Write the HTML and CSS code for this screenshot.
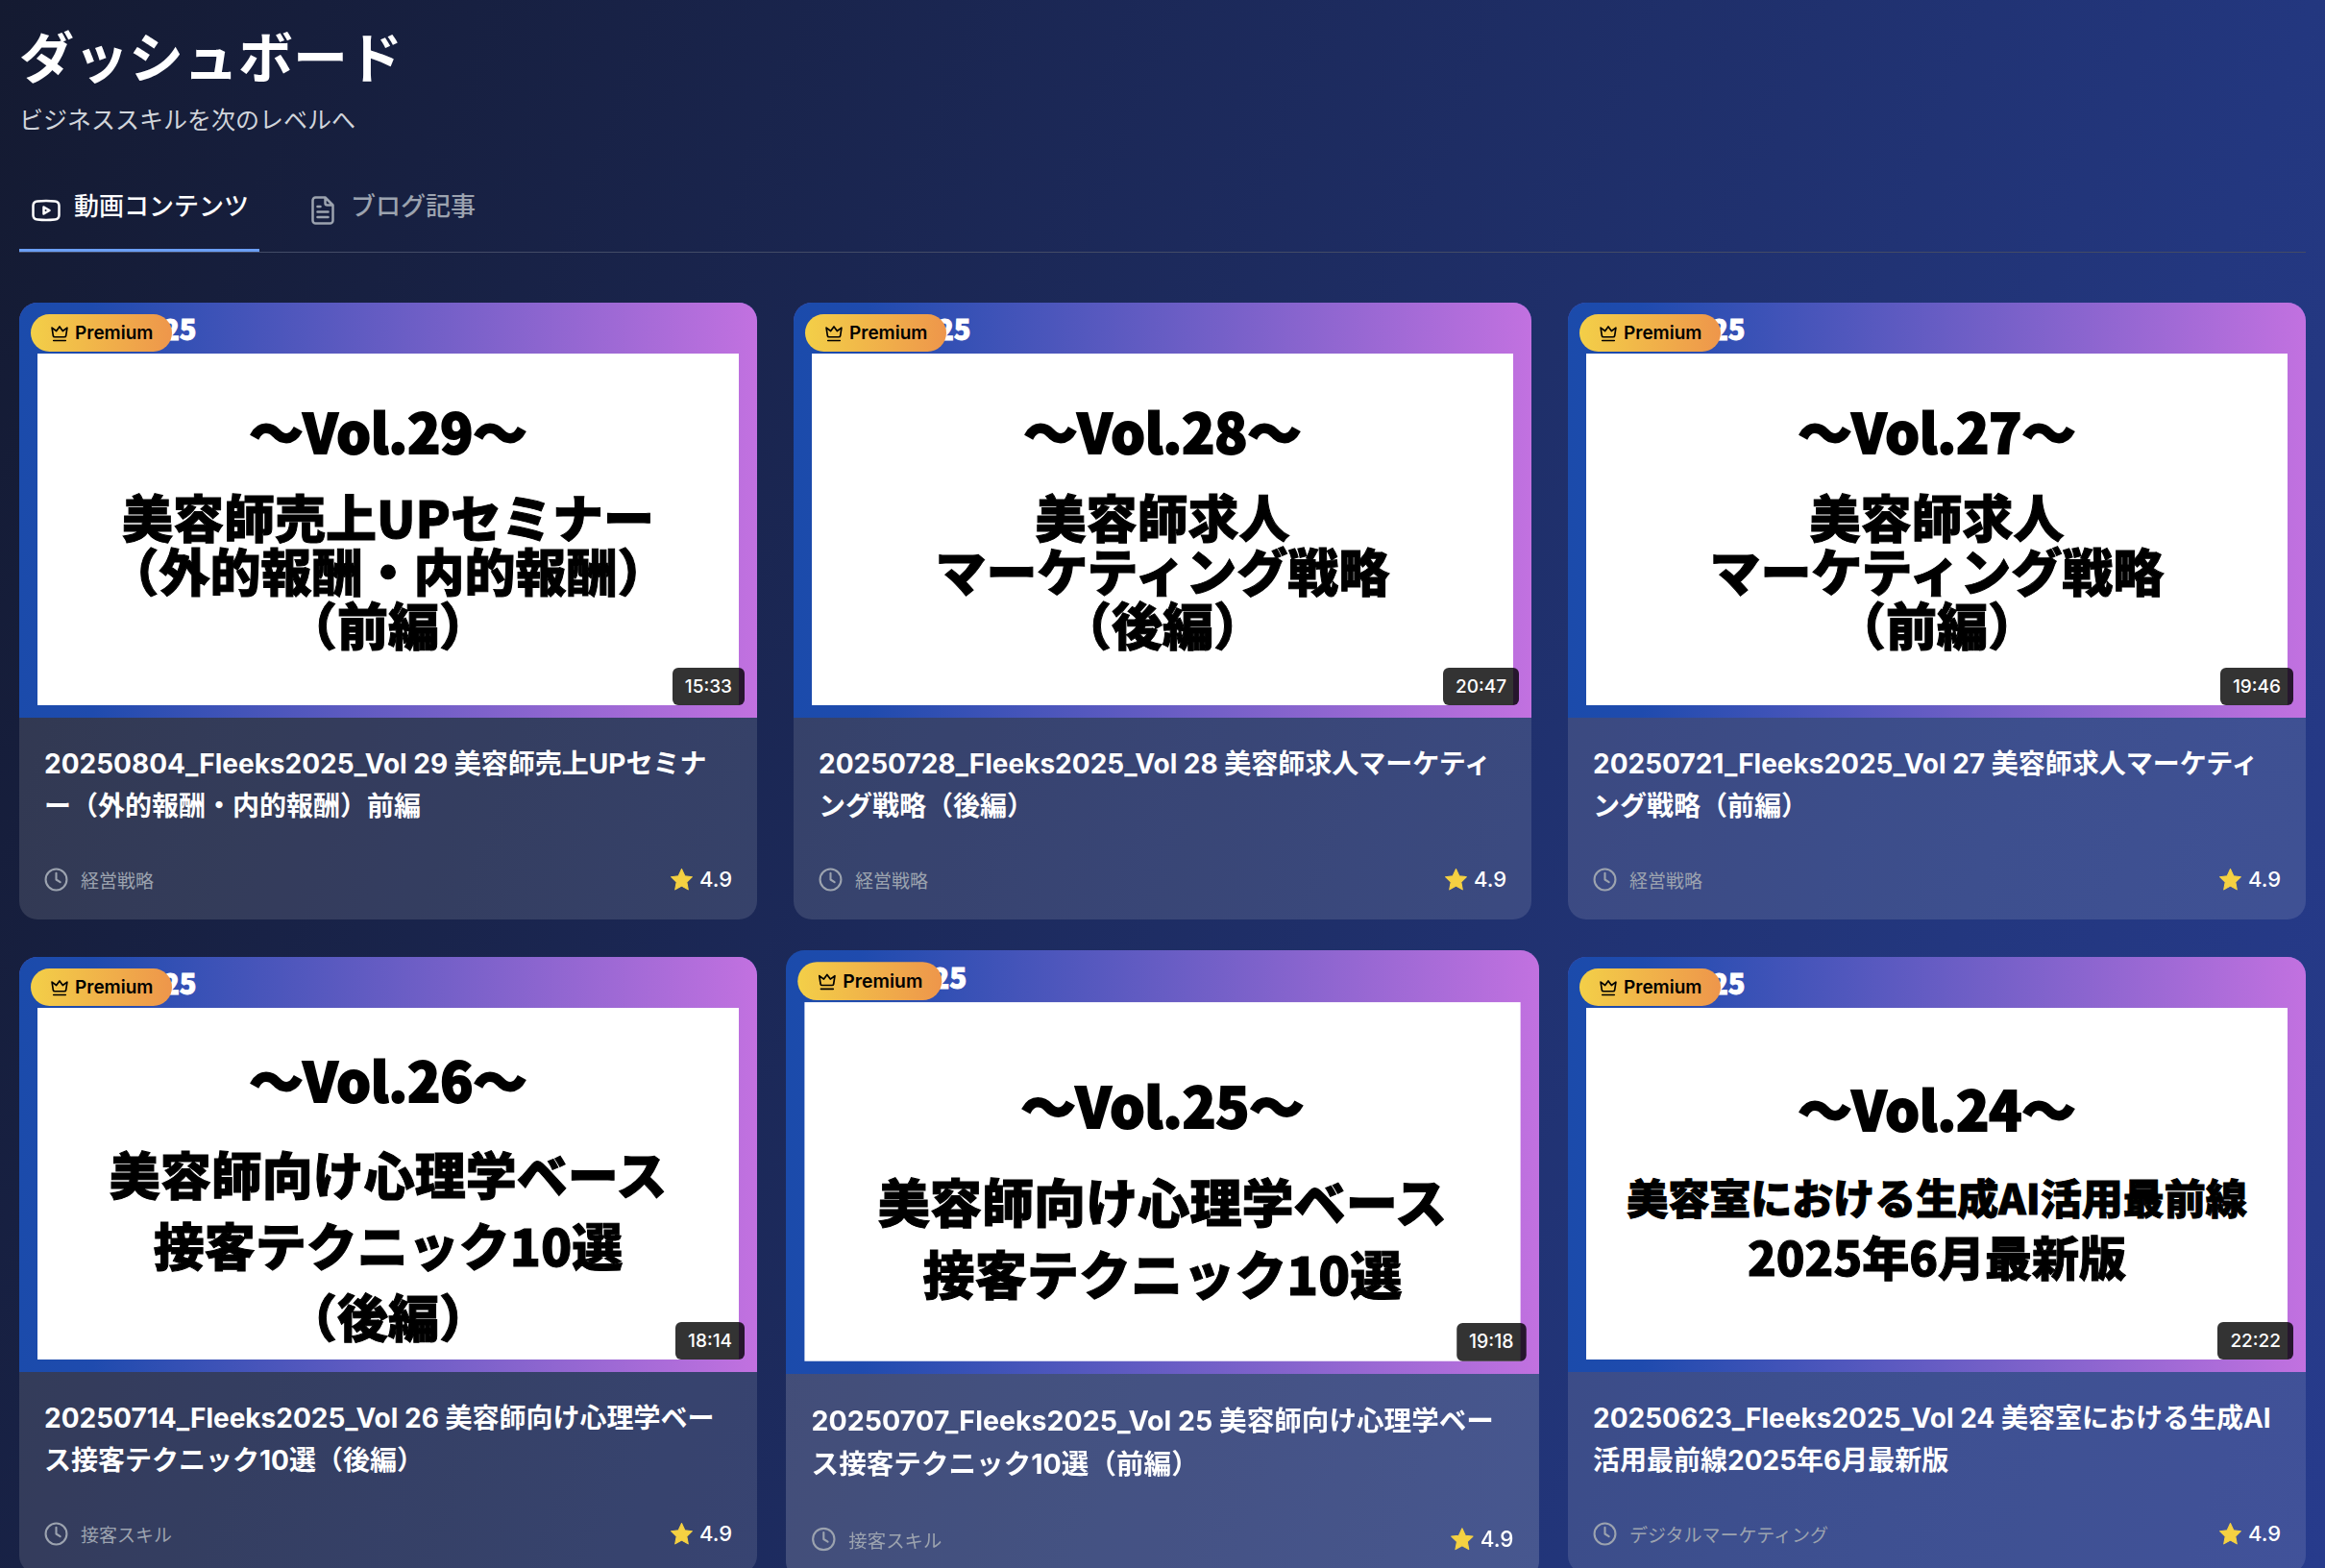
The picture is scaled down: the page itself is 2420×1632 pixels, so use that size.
FILE: index.html
```
<!DOCTYPE html>
<html lang="ja">
<head>
<meta charset="utf-8">
<title>ダッシュボード</title>
<link rel="stylesheet" href="styles.css">
</head>
<body>
<svg class="sprite" aria-hidden="true">
  <symbol id="crown" viewBox="0 0 24 24"><path d="M4 15 2.500 5l5.500 4L12 3.500 16 9l5.500-4L20 15q-.3 1.500-2 1.500H6Q4.300 16.500 4 15ZM4.500 21h15"/></symbol>
  <symbol id="clock" viewBox="0 0 24 24"><circle cx="12" cy="12" r="10.500"/><path d="M12 5.500V12l4 2.500"/></symbol>
  <symbol id="star" viewBox="0 0 24 24"><path d="m12 1.500 3.200 6.900 7.300.9-5.400 5.200 1.400 7.500L12 18.400 5.500 22l1.400-7.500L1.500 9.300l7.300-.9Z"/></symbol>
</svg>
<header class="header">
  <h1 class="header-title">ダッシュボード</h1>
  <p class="header-lead">ビジネススキルを次のレベルへ</p>
</header>
<nav class="tabs">
  <button class="tab tab-active" type="button">
    <svg class="tab-icon" viewBox="0 0 32 32"><path d="M7 6.500Q16 5.500 25 6.500 29.500 7 29.500 11V21Q29.500 25 25 25.500 16 26.500 7 25.500 2.500 25 2.500 21V11Q2.500 7 7 6.500Z"/><path d="m13.500 12.500 6 3.500-6 3.500Z"/></svg>
    <span class="tab-text">動画コンテンツ</span>
  </button>
  <button class="tab" type="button">
    <svg class="tab-icon" viewBox="0 0 32 32"><path d="M18.500 2.500H8.500a3 3 0 0 0-3 3v21a3 3 0 0 0 3 3h15a3 3 0 0 0 3-3V10.500ZM18.500 2.500v6a2 2 0 0 0 2 2h6M10.500 12h3M10.500 17.500h11M10.500 23h11"/></svg>
    <span class="tab-text">ブログ記事</span>
  </button>
</nav>
<main class="grid">
  <article class="card">
    <div class="thumb"><p class="thumb-series">Fleeks2025</p>
      <div class="slide"><p class="vol">〜Vol.29〜</p><p class="topic">美容師売上UPセミナー<br>（外的報酬・内的報酬）<br>（前編）</p></div>
      <span class="premium"><svg class="crown"><use href="#crown"/></svg>Premium</span><span class="duration">15:33</span></div>
    <div class="info"><h2 class="title">20250804_Fleeks2025_Vol 29 美容師売上UPセミナー（外的報酬・内的報酬）前編</h2>
      <div class="meta"><span class="category"><svg class="clock"><use href="#clock"/></svg>経営戦略</span><span class="rating"><svg class="star"><use href="#star"/></svg>4.9</span></div></div>
  </article>
  <article class="card">
    <div class="thumb"><p class="thumb-series">Fleeks2025</p>
      <div class="slide"><p class="vol">〜Vol.28〜</p><p class="topic">美容師求人<br>マーケティング戦略<br>（後編）</p></div>
      <span class="premium"><svg class="crown"><use href="#crown"/></svg>Premium</span><span class="duration">20:47</span></div>
    <div class="info"><h2 class="title">20250728_Fleeks2025_Vol 28 美容師求人マーケティング戦略（後編）</h2>
      <div class="meta"><span class="category"><svg class="clock"><use href="#clock"/></svg>経営戦略</span><span class="rating"><svg class="star"><use href="#star"/></svg>4.9</span></div></div>
  </article>
  <article class="card">
    <div class="thumb"><p class="thumb-series">Fleeks2025</p>
      <div class="slide"><p class="vol">〜Vol.27〜</p><p class="topic">美容師求人<br>マーケティング戦略<br>（前編）</p></div>
      <span class="premium"><svg class="crown"><use href="#crown"/></svg>Premium</span><span class="duration">19:46</span></div>
    <div class="info"><h2 class="title">20250721_Fleeks2025_Vol 27 美容師求人マーケティング戦略（前編）</h2>
      <div class="meta"><span class="category"><svg class="clock"><use href="#clock"/></svg>経営戦略</span><span class="rating"><svg class="star"><use href="#star"/></svg>4.9</span></div></div>
  </article>
  <article class="card">
    <div class="thumb"><p class="thumb-series">Fleeks2025</p>
      <div class="slide slide-loose"><p class="vol">〜Vol.26〜</p><p class="topic topic-loose">美容師向け心理学ベース<br>接客テクニック10選<br>（後編）</p></div>
      <span class="premium"><svg class="crown"><use href="#crown"/></svg>Premium</span><span class="duration">18:14</span></div>
    <div class="info"><h2 class="title">20250714_Fleeks2025_Vol 26 美容師向け心理学ベース接客テクニック10選（後編）</h2>
      <div class="meta"><span class="category"><svg class="clock"><use href="#clock"/></svg>接客スキル</span><span class="rating"><svg class="star"><use href="#star"/></svg>4.9</span></div></div>
  </article>
  <article class="card card-hover">
    <div class="thumb"><p class="thumb-series">Fleeks2025</p>
      <div class="slide slide-two"><p class="vol">〜Vol.25〜</p><p class="topic topic-loose">美容師向け心理学ベース<br>接客テクニック10選</p></div>
      <span class="premium"><svg class="crown"><use href="#crown"/></svg>Premium</span><span class="duration">19:18</span></div>
    <div class="info"><h2 class="title">20250707_Fleeks2025_Vol 25 美容師向け心理学ベース接客テクニック10選（前編）</h2>
      <div class="meta"><span class="category"><svg class="clock"><use href="#clock"/></svg>接客スキル</span><span class="rating"><svg class="star"><use href="#star"/></svg>4.9</span></div></div>
  </article>
  <article class="card">
    <div class="thumb"><p class="thumb-series">Fleeks2025</p>
      <div class="slide slide-two"><p class="vol">〜Vol.24〜</p><p class="topic topic-small">美容室における生成AI活用最前線<br><span class="topic-mid">2025年6月最新版</span></p></div>
      <span class="premium"><svg class="crown"><use href="#crown"/></svg>Premium</span><span class="duration">22:22</span></div>
    <div class="info"><h2 class="title">20250623_Fleeks2025_Vol 24 美容室における生成AI活用最前線2025年6月最新版</h2>
      <div class="meta"><span class="category"><svg class="clock"><use href="#clock"/></svg>デジタルマーケティング</span><span class="rating"><svg class="star"><use href="#star"/></svg>4.9</span></div></div>
  </article>
</main>
</body>
</html>
```
FILE: styles.css
```
* { box-sizing: border-box; margin: 0; padding: 0; }
html { height: 100%; overflow: hidden; background: #1c2654; }
body {
  height: 100%;
  overflow: hidden;
  padding: 20px;
  color: #fff;
  font-family: Inter, "Noto Sans CJK JP", sans-serif;
  background: linear-gradient(111deg, #141a31 0%, #23377f 79%, #273b8c 100%);
}
.sprite { display: none; }
.header-title { font-size: 57px; line-height: 82px; font-weight: 700; }
.header-lead { margin-top: 3px; font-size: 25px; line-height: 40px; color: #d1d5db; }
.tabs { display: flex; gap: 38px; margin-top: 38px; border-bottom: 1px solid #434b66; }
.tab {
  display: flex; align-items: center; gap: 13px;
  height: 79px; padding: 0 11px 12px 12px;
  border: 0; border-bottom: 3px solid transparent;
  background: none; color: #9ca3af;
  font: 500 26px/40px Inter, "Noto Sans CJK JP", sans-serif;
}
.tab-active { color: #fff; border-color: #6b9ff5; }
.tab-icon { width: 32px; height: 32px; margin-top: 8px; fill: none; stroke: currentColor; stroke-width: 2.500; stroke-linejoin: round; stroke-linecap: round; }
.grid { display: grid; grid-template-columns: repeat(3, 1fr); gap: 39px 38px; margin-top: 52px; }
.card { overflow: hidden; border-radius: 19px; }
.card-hover { transform: scale(1.0208333); transform-origin: 50% 336px; }
.thumb {
  position: relative; display: flex; flex-direction: column;
  aspect-ratio: 16 / 9; padding: 0 19px 13px;
  background: #5a55c0 linear-gradient(90deg, #1b4bab 0%, #1f4bae 10%, #7560c8 58%, #c271e0 100%) no-repeat;
}
.thumb-series { font: 900 29px/53px "Noto Sans CJK JP", sans-serif; -webkit-text-stroke: 1px #fff; }
.slide {
  flex: 1; display: flex; flex-direction: column; align-items: center; gap: 21px;
  padding-top: 40px; background: #fff; color: #000; text-align: center; white-space: nowrap;
  font-family: "Noto Sans CJK JP", sans-serif; font-weight: 900;
  -webkit-text-stroke: 1px #000;
}
.slide-loose { padding-top: 34px; }
.slide-two { padding-top: 64px; }
.vol { font-size: 56px; line-height: 80px; -webkit-text-stroke: 2px #000; }
.topic { font-size: 53px; line-height: 56px; }
.topic-loose { line-height: 74px; }
.topic-small { font-size: 43px; line-height: 62px; }
.topic-mid { font-size: 49px; }
.premium {
  position: absolute; left: 12px; top: 12px;
  display: flex; align-items: center; gap: 6px;
  height: 39px; padding: 0 20px; border-radius: 20px;
  background: linear-gradient(90deg, #f3cf48, #ee964b); color: #000;
  font-size: 19px; font-weight: 600;
}
.crown { width: 20px; height: 20px; fill: none; stroke: currentColor; stroke-width: 2; stroke-linejoin: round; stroke-linecap: round; }
.duration {
  position: absolute; right: 13px; bottom: 13px;
  padding: 0 13px; border-radius: 6px;
  background: rgba(0, 0, 0, .8); font-size: 19px; line-height: 39px; font-weight: 500;
}
.info { padding: 26px; background: rgba(255, 255, 255, .12); }
.card-hover .info { background: rgba(255, 255, 255, .17); }
.title { height: 88px; padding-right: 6px; font-size: 28px; line-height: 44px; font-weight: 700; word-break: break-all; }
.meta { display: flex; justify-content: space-between; align-items: center; margin-top: 38px; height: 32px; }
.category, .rating { display: flex; align-items: center; }
.category { gap: 13px; color: #9ca3af; font-size: 19px; }
.rating { gap: 6px; font-size: 22px; font-weight: 500; }
.clock { width: 25px; height: 25px; fill: none; stroke: currentColor; stroke-width: 2; stroke-linecap: round; stroke-linejoin: round; }
.star { width: 25px; height: 25px; fill: #f5d142; stroke: #f5d142; stroke-width: 1; stroke-linejoin: round; }
```
